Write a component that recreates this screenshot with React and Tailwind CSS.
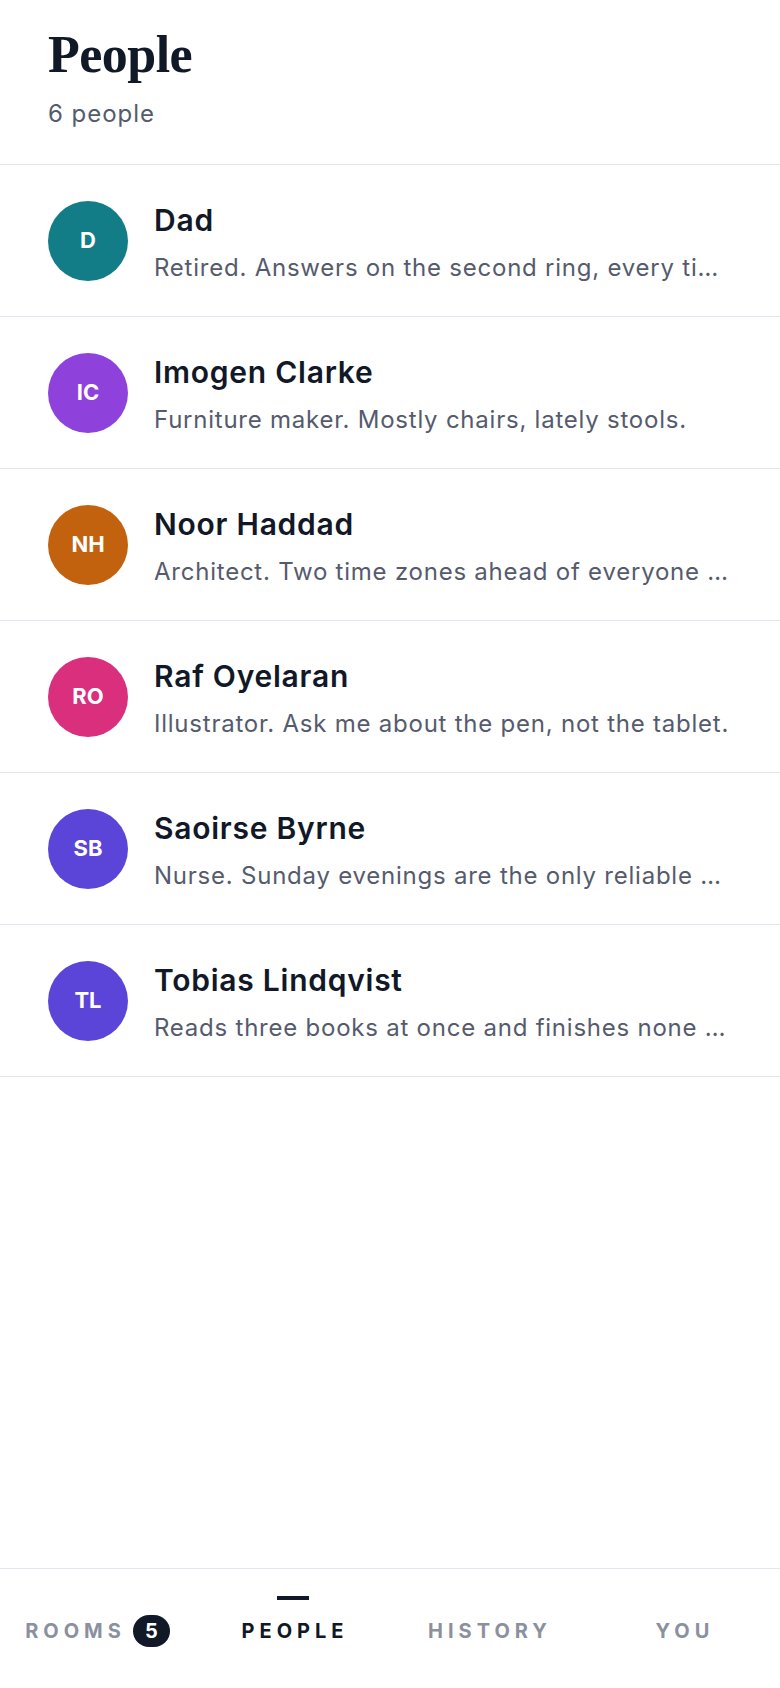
import React from 'react';

const people = [
  { initials: 'D', name: 'Dad', bio: 'Retired. Answers on the second ring, every time, without fail.', color: 'bg-[#127c87]' },
  { initials: 'IC', name: 'Imogen Clarke', bio: 'Furniture maker. Mostly chairs, lately stools.', color: 'bg-[#8f41dc]' },
  { initials: 'NH', name: 'Noor Haddad', bio: 'Architect. Two time zones ahead of everyone else in the family.', color: 'bg-[#c3620e]' },
  { initials: 'RO', name: 'Raf Oyelaran', bio: 'Illustrator. Ask me about the pen, not the tablet.', color: 'bg-[#d92f7d]' },
  { initials: 'SB', name: 'Saoirse Byrne', bio: 'Nurse. Sunday evenings are the only reliable slot for calls.', color: 'bg-[#5b45d8]' },
  { initials: 'TL', name: 'Tobias Lindqvist', bio: 'Reads three books at once and finishes none of them.', color: 'bg-[#5b45d8]' },
];

const tabs = [
  { label: 'ROOMS', badge: 5 },
  { label: 'PEOPLE', active: true },
  { label: 'HISTORY' },
  { label: 'YOU' },
];

const PersonRow = ({ person }) => (
  <div className="flex h-[152px] items-center gap-[26px] border-b border-[#e4e6f0] px-12">
    <div className={`flex h-20 w-20 shrink-0 items-center justify-center rounded-full text-[22px] font-bold text-white ${person.color}`}>
      {person.initials}
    </div>
    <div className="min-w-0 flex-1 pt-[4px]">
      <div className="truncate text-[30px] font-semibold leading-[36px] tracking-[0.025em] text-[#111827]">{person.name}</div>
      <div className="mt-[15px] truncate text-[24px] leading-[30px] tracking-[0.032em] text-[#555b6d]">{person.bio}</div>
    </div>
  </div>
);

export default function App() {
  return (
    <div className="flex h-screen flex-col bg-white font-['Inter','Liberation_Sans',sans-serif]">
      {/* Header */}
      <div className="h-[165px] shrink-0 border-b border-[#e4e6f0] px-12 pt-[29px]">
        <h1 className="font-['Liberation_Serif',serif] text-[52px] font-bold leading-[52px] tracking-[-0.01em] text-[#111827]">
          People
        </h1>
        <p className="mt-[18px] text-[24px] leading-[30px] tracking-[0.04em] text-[#555b6d]">6 people</p>
      </div>

      {/* List */}
      <div className="flex-1 overflow-hidden">
        {people.map((p) => (
          <PersonRow key={p.name} person={p} />
        ))}
      </div>

      {/* Bottom nav */}
      <nav className="grid h-[120px] shrink-0 grid-cols-4 border-t border-[#e4e6f0]">
        {tabs.map((tab) => (
          <div key={tab.label} className="flex flex-col items-center pt-[27px]">
            <div className={`h-1 w-8 ${tab.active ? 'bg-[#111827]' : 'bg-transparent'}`} />
            <div className="mt-[15px] flex h-8 items-center">
              <span
                className={`mr-[-5px] text-[20px] font-bold tracking-[0.25em] ${
                  tab.active ? 'text-[#111827]' : 'text-[#8b90a0]'
                }`}
              >
                {tab.label}
              </span>
              {tab.badge && (
                <span className="ml-[12px] flex h-8 min-w-[37px] items-center justify-center rounded-full bg-[#111827] px-2 text-[20px] font-bold text-white">
                  {tab.badge}
                </span>
              )}
            </div>
          </div>
        ))}
      </nav>
    </div>
  );
}
